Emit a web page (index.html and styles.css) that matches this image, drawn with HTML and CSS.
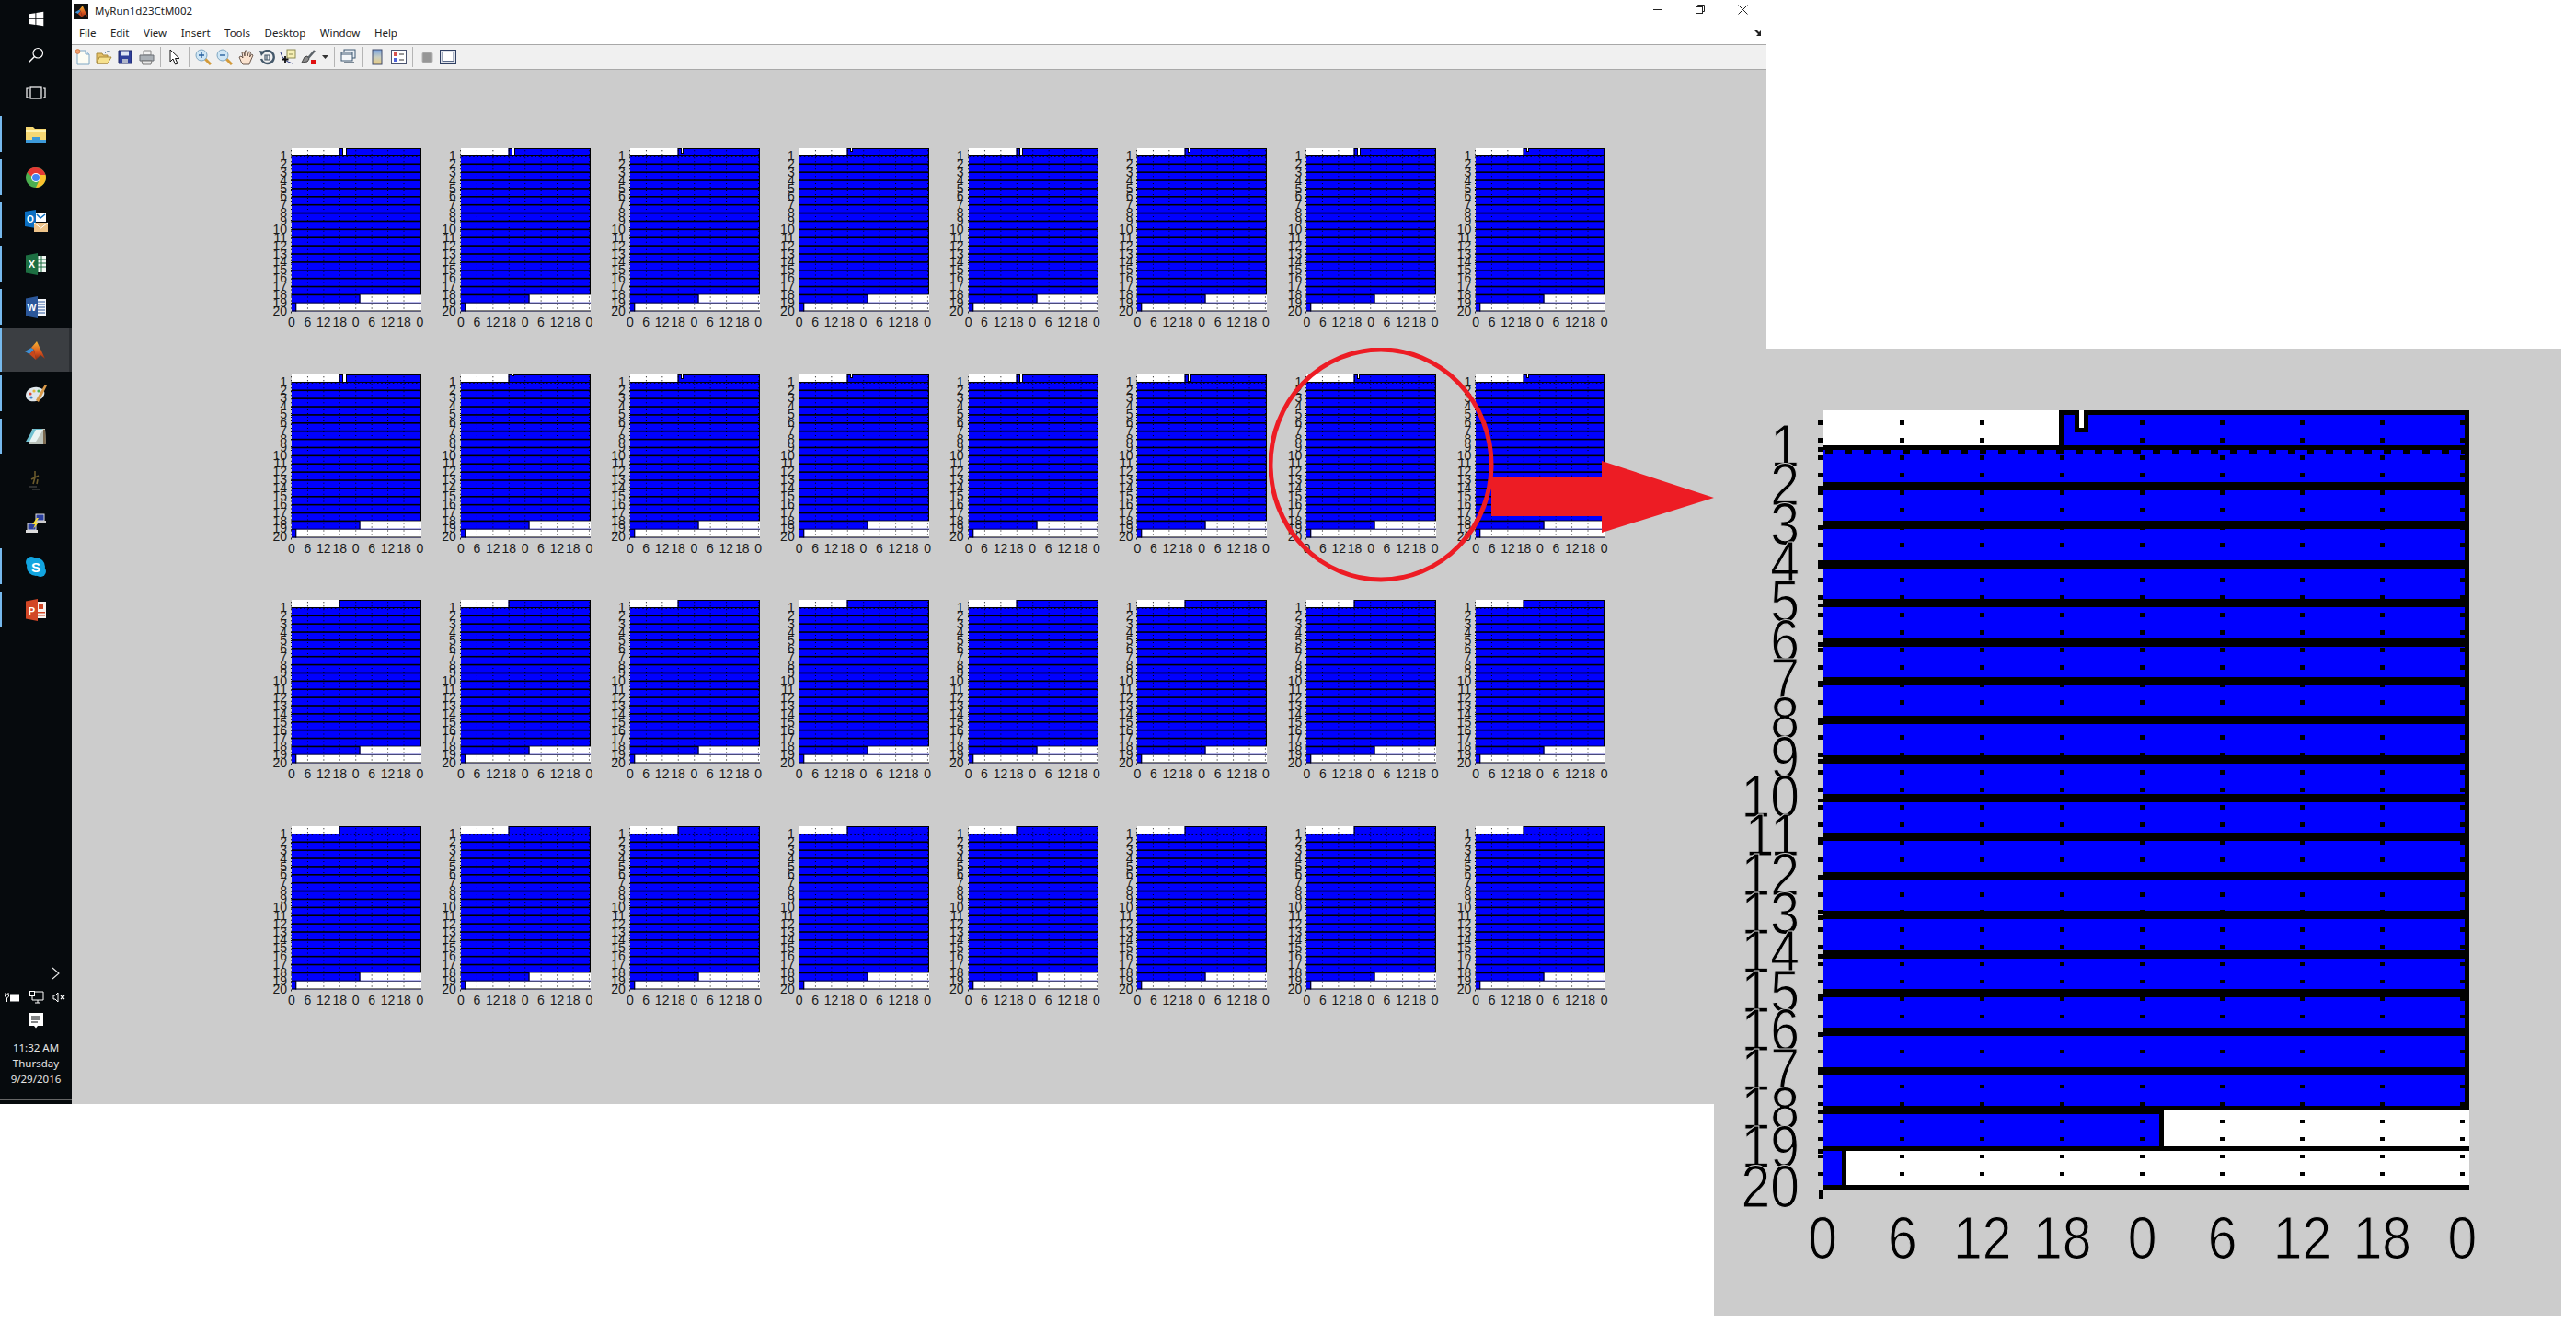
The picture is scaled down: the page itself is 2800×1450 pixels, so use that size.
FILE: index.html
```html
<!DOCTYPE html>
<html lang="en">
<head>
    <meta charset="UTF-8">
    <title>MyRun1d23CtM002</title>
    <link rel="stylesheet" href="styles.css">
</head>
<body>
    <svg class="defs" width="0" height="0">
        <defs>
            <linearGradient id="peak" x1="0" y1="0" x2="0" y2="1">
                <stop offset="0" stop-color="#f7b733"/>
                <stop offset="0.6" stop-color="#d9541e"/>
                <stop offset="1" stop-color="#8e2a10"/>
            </linearGradient>
            <symbol id="matlab" viewBox="0 0 24 24">
                <path d="M1 13 L8 9 L11 11 L6 16 Z" fill="#3f8fd2"/>
                <path d="M8 9 L14 2 L23 21 L18 17 L13 22 L11 11 Z" fill="url(#peak)"/>
                <path d="M6 16 L11 11 L13 22 Z" fill="#c9471a"/>
            </symbol>
        </defs>
    </svg>

    <div class="desktop">
        <!-- taskbar -->
        <aside class="taskbar">
            <div class="start-item">
                <svg width="17" height="17" viewBox="0 0 24 24"><path fill="#fff" d="M1 4.5 L10.5 3 V11.5 H1 Z M11.8 2.8 L23 1 V11.5 H11.8 Z M1 12.8 H10.5 V21 L1 19.6 Z M11.8 12.8 H23 V23 L11.8 21.2 Z"/></svg>
            </div>
            <div class="start-item">
                <svg width="18" height="18" viewBox="0 0 24 24" fill="none" stroke="#fff" stroke-width="1.6"><circle cx="15" cy="9" r="7"/><path d="M10 14 L2 22" stroke-width="2"/></svg>
            </div>
            <div class="start-item view-item">
                <svg width="22" height="14" viewBox="0 0 22 14" fill="none" stroke="#fff" stroke-width="1.2"><rect x="5" y="1" width="12" height="12"/><path d="M3 2 H1 V12 H3 M19 2 H21 V12 H19"/></svg>
            </div>

            <div class="app running">
                <svg width="24" height="24" viewBox="0 0 24 24"><path fill="#f6d873" d="M1 4 H9 L11 6 H23 V21 H1 Z"/><path fill="#fff3b0" d="M1 7 H23 V10 H1 Z"/><path fill="#3d9ad9" d="M1 18 H8 V15 H16 V18 H23 V21 H1 Z"/></svg>
            </div>
            <div class="app running">
                <svg width="24" height="24" viewBox="0 0 24 24"><circle cx="12" cy="12" r="11" fill="#4caf50"/><path fill="#e53935" d="M2.5 6.5 A11 11 0 0 1 22.5 9 H12 A4 4 0 0 0 8 11 Z"/><path fill="#fbc02d" d="M22.5 9 A11 11 0 0 1 12 23 L16 14 A4 4 0 0 0 16 9 Z"/><circle cx="12" cy="12" r="5" fill="#fff"/><circle cx="12" cy="12" r="4" fill="#4285f4"/></svg>
            </div>
            <div class="app running">
                <svg width="26" height="26" viewBox="0 0 26 26"><path fill="#0b6fc2" d="M1 3 L13 1 V21 L1 19 Z"/><path fill="#fff" d="M13 5 H24 V14 H13 Z"/><path fill="none" stroke="#0b6fc2" stroke-width="1.6" d="M14 6 L18 10 L23 6"/><text x="7" y="15" class="logo-letter" font-size="10" text-anchor="middle">O</text><path fill="#eec48a" d="M11 15 H26 V25 H11 Z"/><path fill="none" stroke="#fff" d="M11 15 L18.5 21 L26 15"/></svg>
            </div>
            <div class="app running">
                <svg width="24" height="24" viewBox="0 0 24 24"><path fill="#f2f7f3" d="M11 3 H23 V21 H11 Z"/><path fill="none" stroke="#1d6f42" d="M14 3 V21 M18 3 V21 M11 7 H23 M11 11 H23 M11 15 H23"/><path fill="#1d6f42" d="M1 2.5 L14 0 V24 L1 21.5 Z"/><text x="7.5" y="16" class="logo-letter" font-size="11" text-anchor="middle">X</text></svg>
            </div>
            <div class="app running">
                <svg width="24" height="24" viewBox="0 0 24 24"><path fill="#f4f7fb" d="M11 3 H23 V21 H11 Z"/><path fill="none" stroke="#2b579a" d="M14 6 H22 M14 9 H22 M14 12 H22 M14 15 H22 M14 18 H22"/><path fill="#2b579a" d="M1 2.5 L14 0 V24 L1 21.5 Z"/><text x="7.5" y="16" class="logo-letter" font-size="10.5" text-anchor="middle">W</text></svg>
            </div>
            <div class="app running active">
                <svg width="24" height="24"><use href="#matlab"/></svg>
            </div>
            <div class="app running">
                <svg width="24" height="24" viewBox="0 0 24 24"><path fill="#dfe7ec" d="M1 14 C1 8 7 4 14 5 C21 6 23 11 20 15 C18 19 11 21 6 20 C3 19 1 17 1 14 Z"/><circle cx="6" cy="12" r="1.6" fill="#d8483b"/><circle cx="10" cy="9" r="1.6" fill="#e6b63c"/><circle cx="15" cy="9" r="1.6" fill="#4caf50"/><circle cx="7" cy="16" r="1.6" fill="#3d83c9"/><path fill="#d99a4a" d="M12 19 L20 5 L22 2 L24 3 L15 21 Z"/></svg>
            </div>
            <div class="app running">
                <svg width="24" height="24" viewBox="0 0 24 24"><path fill="#bcc3bb" d="M8 3 H22 L23 20 L4 20 Z"/><path fill="#6fc0d0" d="M9 3 H19 L10 17 H1 Z"/><path fill="#e9f3f2" d="M12 4 H20 L12 17 H5 Z"/><path fill="#7c6a50" d="M20 4 L22 4 L23 20 L20 20 Z"/></svg>
            </div>
            <div class="app">
                <svg width="18" height="24" viewBox="0 0 18 24"><path fill="none" stroke="#6b5a2c" stroke-width="1.6" d="M8 2 V9 M4 11 L12 7 M8 9 L6 16 M11 11 L10 16"/><path fill="none" stroke="#3c3c3c" stroke-width="1.4" d="M2 19 H10 M5 22 H14"/></svg>
            </div>
            <div class="app">
                <svg width="24" height="24" viewBox="0 0 24 24"><rect x="12" y="2" width="9" height="7" fill="#2a3f9e" stroke="#ddd"/><path fill="#ccc" d="M11 9 H23 V12 H11 Z"/><rect x="3" y="12" width="9" height="7" fill="#2a3f9e" stroke="#ddd"/><path fill="#ddd" d="M1 19 H14 V22 H1 Z"/><path fill="#f7dc3a" d="M13 6 L8 13 H11 L9 18 L15 11 H12 L15 6 Z"/></svg>
            </div>
            <div class="app running">
                <svg width="24" height="24" viewBox="0 0 24 24"><circle cx="7" cy="7" r="6" fill="#12a5e0"/><circle cx="17" cy="17" r="6" fill="#12a5e0"/><circle cx="12" cy="12" r="10" fill="#12a5e0"/><text x="12" y="17.5" class="logo-letter" font-size="15" text-anchor="middle">S</text></svg>
            </div>
            <div class="app running">
                <svg width="24" height="24" viewBox="0 0 24 24"><path fill="#f7f3ef" d="M11 3 H23 V21 H11 Z"/><path fill="#d24726" d="M15 6 H20 V11 H15 Z M14 14 H22 V15.5 H14 Z M14 17 H22 V18.5 H14 Z"/><path fill="#d24726" d="M1 2.5 L14 0 V24 L1 21.5 Z"/><text x="7.5" y="16.5" class="logo-letter" font-size="11" text-anchor="middle">P</text></svg>
            </div>

            <div class="tray">
                <div class="tray-more">
                    <svg width="9" height="14" viewBox="0 0 9 14" fill="none" stroke="#e8e8e8" stroke-width="1.1"><path d="M1 1 L8 7 L1 13"/></svg>
                </div>
                <div class="tray-icons">
                    <svg width="17" height="12" viewBox="0 0 17 12"><path fill="none" stroke="#fff" d="M1 1 V3 M4 1 V3 M0.5 3 H4.5 V5 L2.5 7 L0.5 5 Z M2.5 7 V11"/><rect x="6" y="2.5" width="10" height="8" fill="#fff"/></svg>
                    <svg width="16" height="14" viewBox="0 0 16 14" fill="none" stroke="#fff"><path d="M3 1 H15 V10 H3 Z M6 13 H12 M9 10 V13"/><rect x="0.5" y="0.5" width="5" height="5" fill="#060a0d"/></svg>
                    <svg width="15" height="12" viewBox="0 0 15 12" fill="none" stroke="#fff"><path d="M1 4 H3 L6 1 V11 L3 8 H1 Z"/><path d="M9 4 L13 8 M13 4 L9 8" stroke-width="1.3"/></svg>
                </div>
                <div class="tray-note">
                    <svg width="16" height="17" viewBox="0 0 16 17"><path fill="#fff" d="M0 0 H16 V14 H10 L8 16.5 L6 14 H0 Z"/><path stroke="#060a0d" d="M3 4 H13 M3 7 H13 M3 10 H10"/></svg>
                </div>
                <div class="clock">
                    <div>11:32 AM</div>
                    <div>Thursday</div>
                    <div>9/29/2016</div>
                </div>
            </div>
        </aside>

        <!-- figure window -->
        <main class="window">
            <header class="titlebar">
                <span class="title-icon"><svg width="15" height="15"><use href="#matlab"/></svg></span>
                <span class="title-text">MyRun1d23CtM002</span>
                <div class="win-controls">
                    <svg width="10" height="10" viewBox="0 0 10 10"><path stroke="#222" d="M0 5.5 H10"/></svg>
                    <svg width="10" height="10" viewBox="0 0 10 10" fill="#fff" stroke="#222"><path d="M2.5 2.5 V0.5 H9.5 V7.5 H7.5"/><rect x="0.5" y="2.5" width="7" height="7"/></svg>
                    <svg width="11" height="11" viewBox="0 0 11 11"><path stroke="#222" d="M0.5 0.5 L10.5 10.5 M10.5 0.5 L0.5 10.5"/></svg>
                </div>
            </header>

            <nav class="menubar">
                <span>File</span>
                <span>Edit</span>
                <span>View</span>
                <span>Insert</span>
                <span>Tools</span>
                <span>Desktop</span>
                <span>Window</span>
                <span>Help</span>
                <svg class="dock-arrow" width="9" height="7" viewBox="0 0 9 7"><path fill="#222" d="M0 1 H3 L5 3 L7 1 V7 H2 L4 5 Z"/></svg>
            </nav>

            <div class="toolbar">
                <span class="tool"><svg width="18" height="18" viewBox="0 0 18 18"><path fill="#fdfdf4" stroke="#7fa7c4" d="M3 2 H12 L16 6 V17 H3 Z"/><path fill="#cfe2ef" stroke="#7fa7c4" d="M12 2 V6 H16"/><circle cx="3.5" cy="3" r="2.4" fill="#f0a070" stroke="#c9652b" stroke-width="0.7"/></svg></span>
                <span class="tool"><svg width="18" height="18" viewBox="0 0 18 18"><path fill="#e5c168" stroke="#a98a3a" d="M1 5 H7 L8 7 H13 V16 H1 Z"/><path fill="#f7e28e" stroke="#a98a3a" d="M1 16 L4 9 H17 L13 16 Z"/><path fill="none" stroke="#6f8fa8" d="M10 5 Q12 1 16 3"/></svg></span>
                <span class="tool"><svg width="16" height="16" viewBox="0 0 16 16"><path fill="#2f3f9a" stroke="#1c2766" d="M1 1 H15 V15 H1 Z"/><rect x="4" y="1.5" width="8" height="5" fill="#dfe5f4"/><rect x="5" y="10" width="6" height="5" fill="#b0b6c9"/></svg></span>
                <span class="tool"><svg width="17" height="17" viewBox="0 0 17 17"><path fill="#f2f2f2" stroke="#888" d="M5 1 H13 V6 H5 Z"/><path fill="#aab0b6" stroke="#6a6f75" d="M1 6 H16 V12 H1 Z"/><path fill="#e8e8e8" stroke="#777" d="M3 12 H14 L13 16 H4 Z"/></svg></span>
                <i class="sep"></i>
                <span class="tool"><svg width="14" height="18" viewBox="0 0 14 18"><path fill="#fff" stroke="#111" d="M2 1 V14 L5 11 L7.5 17 L10 16 L7.5 10.5 H12 Z"/></svg></span>
                <i class="sep"></i>
                <span class="tool"><svg width="18" height="18" viewBox="0 0 18 18"><path stroke="#d29a3b" stroke-width="3" d="M11 11 L17 17"/><circle cx="7" cy="7" r="6" fill="#cfe6f5" stroke="#7ea6c2"/><path stroke="#27609e" stroke-width="1.4" d="M4 7 H10 M7 4 V10"/></svg></span>
                <span class="tool"><svg width="18" height="18" viewBox="0 0 18 18"><path stroke="#d29a3b" stroke-width="3" d="M11 11 L17 17"/><circle cx="7" cy="7" r="6" fill="#cfe6f5" stroke="#7ea6c2"/><path stroke="#27609e" stroke-width="1.4" d="M4 7 H10"/></svg></span>
                <span class="tool"><svg width="17" height="18" viewBox="0 0 17 18"><path fill="#fbe3cf" stroke="#5c4a3e" stroke-width="0.9" d="M4 16 L1 9 L3 8 L5 10 L4 4 L6 3.5 L7 8 L7.5 2 L9.5 2 L10 8 L11.5 3 L13.5 3.5 L12.5 9 L14.5 6 L16 7 L13 14 L12 17 H5 Z"/></svg></span>
                <span class="tool"><svg width="17" height="17" viewBox="0 0 17 17" fill="none"><path stroke="#45596b" stroke-width="2.4" d="M3 4 A7 7 0 1 1 2 10"/><path fill="#45596b" d="M0 1 L6 2 L2 7 Z"/><path stroke="#45596b" stroke-width="1.2" d="M6 6 H11 V11 H6 Z M8 6 V11"/></svg></span>
                <span class="tool"><svg width="19" height="18" viewBox="0 0 19 18" fill="none"><rect x="8" y="1" width="9" height="9" fill="#f6efb5" stroke="#8c8a52"/><path stroke="#8c8a52" d="M10 3.5 H15 M10 6 H15"/><path stroke="#22307d" d="M1 4 Q3 13 14 16"/><path stroke="#111" stroke-width="1.8" d="M6 8 V15 M2.5 11.5 H9.5"/></svg></span>
                <span class="tool"><svg width="18" height="18" viewBox="0 0 18 18"><path fill="#8a8a8a" stroke="#444" d="M1 15 L4 9 L7 8 L9 11 L7 14 Z"/><path stroke="#5b6268" stroke-width="2.6" d="M8 10 L15 2"/><rect x="11" y="12" width="5" height="5" fill="#e01010"/></svg></span>
                <span class="caret"><svg width="7" height="4" viewBox="0 0 7 4"><path fill="#333" d="M0 0 H7 L3.5 4 Z"/></svg></span>
                <i class="sep"></i>
                <span class="tool"><svg width="18" height="18" viewBox="0 0 18 18" fill="none"><rect x="4" y="1" width="12" height="9" fill="#e8eef4" stroke="#3e5972"/><rect x="1" y="4" width="12" height="9" fill="#f4f7fa" stroke="#3e5972"/><path stroke="#3e5972" d="M1 6 H13"/><path stroke="#7b8894" stroke-width="2" d="M4 15 H9 M9 15 H15"/></svg></span>
                <i class="sep"></i>
                <span class="tool"><svg width="12" height="18" viewBox="0 0 12 18"><defs><linearGradient id="cbar" x1="0" y1="0" x2="0" y2="1"><stop offset="0" stop-color="#7ba4df"/><stop offset="0.5" stop-color="#c9cfc2"/><stop offset="1" stop-color="#eccc7c"/></linearGradient></defs><rect x="1" y="1" width="10" height="16" fill="url(#cbar)" stroke="#3e4a6a"/></svg></span>
                <span class="tool"><svg width="17" height="16" viewBox="0 0 17 16"><rect x="0.5" y="0.5" width="16" height="15" fill="#fff" stroke="#4a5470"/><rect x="3" y="3" width="4" height="4" fill="#d9534f"/><rect x="3" y="9" width="4" height="4" fill="#4f62d9"/><path stroke="#333" d="M9 5 H14 M9 11 H14"/></svg></span>
                <i class="sep"></i>
                <span class="tool"><svg width="13" height="13" viewBox="0 0 13 13"><rect x="1" y="1" width="11" height="11" rx="1.5" fill="#969696" stroke="#b5b5b5"/></svg></span>
                <span class="tool"><svg width="18" height="16" viewBox="0 0 18 16"><rect x="0.5" y="0.5" width="17" height="15" fill="#dfe3ea" stroke="#2f3f62"/><rect x="3" y="2.5" width="12" height="10" fill="#fff" stroke="#5a6a8a"/></svg></span>
            </div>

            <!-- 8 x 4 small charts, filled in by charts.js -->
            <section class="figure" id="chartGrid"></section>
        </main>
    </div>

    <!-- enlarged copy of the circled chart -->
    <section class="zoom-panel" id="zoomPanel"></section>

    <svg class="annotations" width="520" height="270" viewBox="0 0 520 270">
        <ellipse cx="122" cy="127" rx="120" ry="125" fill="none" stroke="#ed1c24" stroke-width="5"/>
        <path fill="#ed1c24" d="M242 141 H362 V123 L484 163 L362 201 V183 H242 Z"/>
    </svg>

    <script src="charts.js"></script>
</body>
</html>
```

FILE: styles.css
```css
* {
    box-sizing: border-box;
}
body {
    margin: 0;
    width: 2800px;
    height: 1450px;
    overflow: hidden;
    position: relative;
    background-color: white;
    font-family: "Noto Sans", sans-serif;
}
.defs {
    display: block;
    height: 0;
}
.desktop {
    display: flex;
    width: 1920px;
    height: 1200px;
}
.logo-letter {
    font-family: "Liberation Sans", sans-serif;
    font-weight: bold;
    fill: white;
}

/* taskbar */
.taskbar {
    width: 78px;
    flex: none;
    display: flex;
    flex-direction: column;
    background-color: #060a0d;
}
.start-item {
    height: 40px;
    display: flex;
    align-items: center;
    justify-content: center;
}
.view-item {
    height: 42px;
}
.app {
    height: 47px;
    flex: none;
    position: relative;
    display: flex;
    align-items: center;
    justify-content: center;
}
.app.running::before {
    content: "";
    position: absolute;
    left: 0;
    top: 4px;
    bottom: 4px;
    width: 2px;
    background-color: #76b9ed;
}
.app.active {
    background-color: #3b3e42;
    border-right: 3px solid #2c2f33;
}
.app.active::before {
    top: 0;
    bottom: 0;
}
.tray {
    margin-top: auto;
    padding-bottom: 14px;
    border-bottom: 1px solid #666;
    margin-bottom: 4px;
}
.tray-more {
    display: flex;
    justify-content: flex-end;
    padding-right: 13px;
    height: 18px;
}
.tray-icons {
    display: flex;
    align-items: center;
    justify-content: space-between;
    padding: 0 6px 0 5px;
    height: 22px;
    margin-top: 4px;
}
.tray-note {
    display: flex;
    justify-content: center;
    margin-top: 6px;
    height: 26px;
}
.clock {
    text-align: center;
    color: #e4e4e4;
    font-size: 11.5px;
    line-height: 17px;
    margin-top: 3px;
}

/* window */
.window {
    flex: 1;
    display: flex;
    flex-direction: column;
    background-color: white;
}
.titlebar {
    height: 22px;
    display: flex;
    align-items: center;
}
.title-icon {
    width: 16px;
    height: 17px;
    margin: 2px 7px 0 2px;
    background-color: #111;
    display: flex;
    align-items: center;
    justify-content: center;
}
.title-text {
    font-size: 11.5px;
    color: #222;
}
.win-controls {
    margin-left: auto;
    display: flex;
    align-items: center;
    gap: 36px;
    padding-right: 20px;
    margin-top: -2px;
}
.menubar {
    height: 26px;
    display: flex;
    align-items: center;
    gap: 15.5px;
    padding-left: 8px;
    font-size: 11.5px;
    color: #222;
}
.dock-arrow {
    margin-left: auto;
    margin-right: 4px;
}
.toolbar {
    height: 28px;
    flex: none;
    display: flex;
    align-items: center;
    padding-left: 0.5px;
    background-color: #f0f0f0;
    border-top: 1px solid #a8a8a8;
    border-bottom: 1px solid #a8a8a8;
}
.tool {
    width: 23px;
    display: flex;
    justify-content: center;
    align-items: center;
}
.caret {
    width: 12px;
    display: flex;
    justify-content: center;
}
.sep {
    width: 1px;
    height: 22px;
    margin: 0 3.5px;
    background-color: #b4b4b4;
}

/* figure with the small charts */
.figure {
    flex: 1;
    background-color: #cccccc;
    padding: 85px 0 0 204px;
    display: grid;
    grid-template-columns: repeat(8, 176px);
    column-gap: 7.9px;
    grid-auto-rows: 245.7px;
}

/* one chart, small size first */
.chart {
    display: flex;
    gap: 5px;
    color: #1a1a1a;
    font-family: "Liberation Sans", sans-serif;
    font-size: 14px;
}
.y-axis {
    width: 30px;
    flex: none;
    margin-top: 4px;
    text-align: right;
}
.y-axis span {
    display: block;
    height: 8.875px;
    line-height: 8.875px;
}
.plot-box {
    width: 141px;
    flex: none;
}
.plot {
    display: block;
    width: 100%;
    height: 177.5px;
    overflow: visible;
    background-color: white;
}
.x-axis {
    display: flex;
    justify-content: space-between;
    margin-top: 3.5px;
    padding-right: 1.1%;
    line-height: 16px;
}
.x-axis span {
    width: 0;
    display: flex;
    justify-content: center;
}

/* the enlarged chart */
.zoom-panel {
    position: absolute;
    left: 1863px;
    top: 379px;
    width: 921px;
    height: 1051px;
    padding-top: 67px;
    background-color: #cccccc;
}
.chart-big {
    gap: 25px;
    color: #000;
    font-size: 57px;
    -webkit-text-stroke: 1px #cccccc;
}
.chart-big .y-axis {
    width: 93px;
    margin-top: 17px;
}
.chart-big .y-axis span {
    height: 42.35px;
    line-height: 42.35px;
    transform: scaleY(1.14);
}
.chart-big .plot-box {
    width: 703px;
}
.chart-big .plot {
    height: 847px;
    shape-rendering: crispEdges;
}
.chart-big .x-axis {
    margin-top: 22px;
    line-height: 60px;
}
.chart-big .x-axis span {
    transform: scaleY(1.14);
}

/* red circle and arrow */
.annotations {
    position: absolute;
    left: 1379px;
    top: 378px;
}
```

FILE: charts.js
```js
// Plot size in data units, the big chart is the same plot stretched
const PLOT_W = 141;
const PLOT_H = 177.5;
const ROW_TOP = 8.38;    // first row boundary
const ROW_STEP = 8.885;  // distance between boundaries
const TICK_X = 17.43;
const WHITE_END = 51.6;  // end of the white part in row 1
const ROW19_END = 74.5;
const ROW20_END = 5.2;

// White slot in row 1: [width, depth]. Rows 3 and 4 of the figure have none.
const NOTCHES = [
    [[3, 8], [2, 8], [1, 5], [1, 3], [2, 8], [1, 4], [2, 7], [1, 3]],
    [[3, 8], [1, 1], [1, 4], [1, 3], [2, 8], [2, 7], [1, 4], [1, 3]]
];

function rect(x, y, w, h, fill) {
    return `<rect x="${x}" y="${y}" width="${w}" height="${h}" fill="${fill}"/>`;
}

// The dotted grid and axis ticks are one path, it is the same for every chart
function dotsPath() {
    let d = '';
    for (let k = 0; k <= 8; k++) {
        const x = k === 0 ? -1 : k * TICK_X - 0.5;
        for (let y = 2.3; y < PLOT_H - 1; y += 3.98) {
            d += `M${x} ${y.toFixed(2)}h1v1h-1z`;
        }
    }
    for (let k = 1; k < 20; k++) {
        d += `M-1 ${(ROW_TOP + (k - 1) * ROW_STEP).toFixed(2)}h1v1h-1z`;
    }
    return d + `M-0.8 ${PLOT_H}h0.8v2h-0.8z`;
}
const DOTS = dotsPath();

function rowY(k) {
    return ROW_TOP + (k - 1) * ROW_STEP;
}

function plotSvg(notch, lineH) {
    let s = rect(0, 0, PLOT_W, PLOT_H, '#0000ff');

    // row lines
    for (let k = 2; k <= 18; k++) {
        s += rect(0, rowY(k) - lineH / 2, PLOT_W, lineH, '#000');
    }
    s += rect(0, rowY(1) - 0.4, PLOT_W, 1, '#000');
    s += rect(0, rowY(19) - 0.6, PLOT_W, 1, '#000');
    for (let x = 0.6; x < PLOT_W - 1; x += 4.2) {
        s += rect(x, rowY(1) + 0.6, 1.6, 0.8, '#000');
    }

    // right and top border, blue part only
    s += rect(PLOT_W - 1, 0, 1, rowY(18), '#000');
    s += rect(WHITE_END, 0, PLOT_W - WHITE_END, 1, '#000');

    // row 1: white, then the edge of the blue part
    s += rect(0, 0, WHITE_END, rowY(1) - 0.4, '#fff');
    s += rect(WHITE_END, 0, 1, rowY(1), '#000');
    if (notch) {
        const x = 56;
        s += `<g shape-rendering="crispEdges">`;
        s += rect(x - 1, 0, notch[0] + 2, notch[1] + 1, '#000');
        s += rect(x, 0, notch[0], notch[1], '#fff');
        s += `</g>`;
    }

    // row 19 and row 20
    s += rect(ROW19_END, rowY(18), PLOT_W - ROW19_END, rowY(19) - 0.6 - rowY(18), '#fff');
    s += rect(ROW19_END - 1, rowY(18), 1, rowY(19) - rowY(18), '#000');
    s += rect(ROW20_END, rowY(19) + 0.4, PLOT_W - ROW20_END, PLOT_H - rowY(19) - 0.4, '#fff');
    s += rect(ROW20_END - 1, rowY(19), 1, PLOT_H - rowY(19), '#000');
    s += rect(0, PLOT_H - 1, PLOT_W, 1, '#000');

    s += `<path d="${DOTS}" fill="#000"/>`;
    return `<svg class="plot" viewBox="0 0 ${PLOT_W} ${PLOT_H}" preserveAspectRatio="none">${s}</svg>`;
}

function buildChart(notch, big) {
    const chart = document.createElement('div');
    chart.className = big ? 'chart chart-big' : 'chart';

    let yLabels = '';
    for (let i = 1; i <= 20; i++) {
        yLabels += `<span>${i}</span>`;
    }
    let xLabels = '';
    for (const t of [0, 6, 12, 18, 0, 6, 12, 18, 0]) {
        xLabels += `<span>${t}</span>`;
    }

    chart.innerHTML = `<div class="y-axis">${yLabels}</div>
        <div class="plot-box">${plotSvg(notch, big ? 1.9 : 1.6)}<div class="x-axis">${xLabels}</div></div>`;
    return chart;
}

const grid = document.getElementById('chartGrid');
for (let row = 0; row < 4; row++) {
    for (let col = 0; col < 8; col++) {
        const notch = NOTCHES[row] ? NOTCHES[row][col] : null;
        grid.appendChild(buildChart(notch, false));
    }
}

// Enlarged chart is the 7th one of the second row
document.getElementById('zoomPanel').appendChild(buildChart(NOTCHES[1][6], true));
```
